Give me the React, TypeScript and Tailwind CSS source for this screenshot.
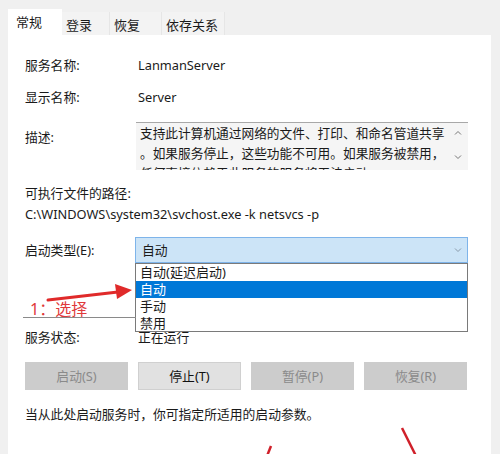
import React from "react";

const font = "font-['Segoe_UI','Noto_Sans','Noto_Sans_CJK_SC',sans-serif]";

const tabs = ["常规", "登录", "恢复", "依存关系"];

const options = ["自动(延迟启动)", "自动", "手动", "禁用"];

function Button({ label, disabled }: { label: string; disabled?: boolean }) {
  return (
    <div
      className={`w-[103px] h-[28px] flex items-center justify-center text-[12.8px] ${
        disabled
          ? "bg-[#cccccc] text-[#8a8a8a]"
          : "bg-[#e1e1e1] border border-[#d0d0d0] text-[#111]"
      }`}
    >
      {label}
    </div>
  );
}

export default function App() {
  return (
    <div className={`relative w-[500px] h-[454px] overflow-hidden bg-[#f0f0f0] text-[#1a1a1a] ${font}`}>
      {/* tab strip */}
      <div className="h-[35px] flex items-end pl-[8px]">
        {tabs.map((t, i) =>
          i === 0 ? (
            <div
              key={t}
              className="h-[26px] w-[54px] bg-white pl-[8px] pt-[3px] text-[13px] leading-[20px]"
            >
              {t}
            </div>
          ) : (
            <div
              key={t}
              className="h-[23px] bg-[#f3f3f3] border-r border-[#e6e6e6] px-[4px] pt-[3px] text-[13px] leading-[20px]"
              style={{ width: [0, 48, 52, 63][i] }}
            >
              {t}
            </div>
          )
        )}
      </div>

      {/* panel */}
      <div className="ml-[8px] w-[483px] h-[419px] bg-white pl-[17px] pt-[20px] text-[12.8px] leading-[20px]">
        <div className="flex">
          <span className="w-[113px]">服务名称:</span>
          <span>LanmanServer</span>
        </div>
        <div className="flex mt-[12px]">
          <span className="w-[113px]">显示名称:</span>
          <span>Server</span>
        </div>

        <div className="flex mt-[15px]">
          <span className="w-[111px] mt-[5px]">描述:</span>
          <div className="relative w-[332px] h-[48px] overflow-hidden bg-[#f5f5f5] border-t border-[#a8a8a8] pl-[4px] text-[12.7px] leading-[20px] whitespace-nowrap">
            <div>支持此计算机通过网络的文件、打印、和命名管道共享</div>
            <div>。如果服务停止，这些功能不可用。如果服务被禁用，</div>
            <div>任何直接依赖于此服务的服务将无法启动</div>
            <svg className="absolute right-[6px] top-[7px]" width="8" height="6" viewBox="0 0 8 6">
              <path d="M1 4.5 L4 1.5 L7 4.5" fill="none" stroke="#777" strokeWidth="1" />
            </svg>
            <svg className="absolute right-[6px] top-[31px]" width="8" height="6" viewBox="0 0 8 6">
              <path d="M1 1.5 L4 4.5 L7 1.5" fill="none" stroke="#777" strokeWidth="1" />
            </svg>
          </div>
        </div>

        <div className="mt-[13px]">可执行文件的路径:</div>
        <div className="mt-[1px]">C:\WINDOWS\system32\svchost.exe -k netsvcs -p</div>

        <div className="flex items-center mt-[13px]">
          <span className="w-[110px]">启动类型(E):</span>
          <div className="relative w-[333px] h-[26px] bg-[#cce4f7] border border-[#7eb4ea] flex items-center pl-[6px]">
            自动
            <svg className="absolute right-[5px] top-[9px]" width="8" height="6" viewBox="0 0 8 6">
              <path d="M1 1.5 L4 4.5 L7 1.5" fill="none" stroke="#8a9aaa" strokeWidth="1" />
            </svg>
          </div>
        </div>

        <div className="flex mt-[64px]">
          <span className="w-[113px]">服务状态:</span>
          <span>正在运行</span>
        </div>

        <div className="flex gap-[10px] mt-[15px]">
          <Button label="启动(S)" disabled />
          <Button label="停止(T)" />
          <Button label="暂停(P)" disabled />
          <Button label="恢复(R)" disabled />
        </div>

        <div className="mt-[14px]">当从此处启动服务时，你可指定所适用的启动参数。</div>
      </div>

      {/* open dropdown list */}
      <div className="absolute left-[135px] top-[263px] w-[333px] h-[69px] bg-white border border-[#7a7a7a] text-[13px] leading-[17px]">
        {options.map((o, i) => (
          <div
            key={o}
            className={`h-[17px] pl-[4px] ${i === 1 ? "bg-[#0078d7] text-white" : ""}`}
          >
            {o}
          </div>
        ))}
      </div>

      {/* red annotations */}
      <div className="absolute left-[23px] top-[317px] w-[113px] h-px bg-[#8a8a8a]" />
      <div className="absolute left-[30px] top-[300px] text-[16px] leading-[18px] text-[#e0393b]">1：选择</div>
      <svg className="absolute left-0 top-0 pointer-events-none" width="500" height="454">
        <line x1="48" y1="300" x2="118" y2="292" stroke="#e02a2a" strokeWidth="3" strokeLinecap="round" />
        <path d="M132 290 L115 284 L117 299 Z" fill="#e02a2a" />
        <line x1="271" y1="446" x2="267" y2="456" stroke="#d0202a" strokeWidth="2.5" />
        <line x1="402" y1="428" x2="416" y2="456" stroke="#d0202a" strokeWidth="2.5" />
      </svg>
    </div>
  );
}
